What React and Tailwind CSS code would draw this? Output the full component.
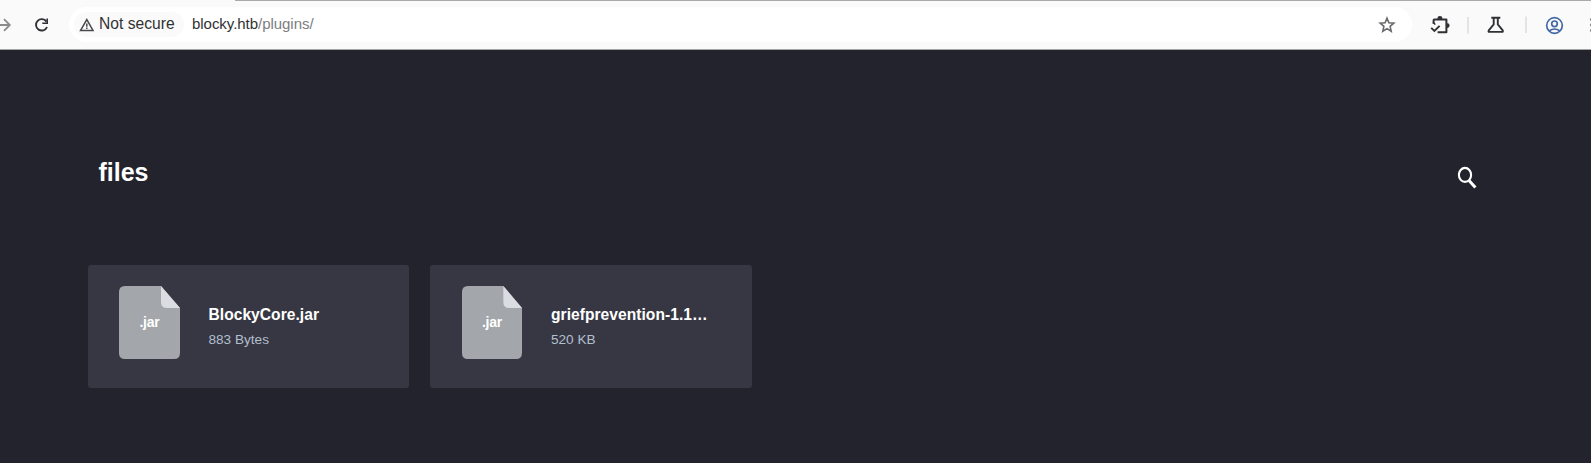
import React from "react";

function ToolbarIcons() {
  return (
    <svg className="h-[49px] w-[179px] shrink-0" viewBox="1412 0 179 49" fill="none">
      <g stroke="#303134" strokeWidth="2">
        <path d="M1433.6 23.4V20.2Q1433.6 19.4 1434.4 19.4H1446.4V32.2H1437.6" strokeLinejoin="round" />
        <path d="M1431.2 27.8L1434.4 31L1439.6 25.8" strokeWidth="1.9" />
      </g>
      <path d="M1437.4 19V18.2A2.5 2.1 0 0 1 1442.4 18.2V19ZM1446.8 23.2H1447.3A2.3 2.4 0 0 1 1447.3 28H1446.8Z" fill="#303134" />
      <path d="M1432.8 22.8Q1434.6 23.2 1435.2 24.6" stroke="#303134" strokeWidth="1.4" />
      <path d="M1468 17V33.5M1526 16.5V33" stroke="#dedfe1" strokeWidth="1.6" />
      <path d="M1491.3 17.8H1500.3M1493.7 18V24.4L1488.8 30.4Q1488 31.9 1489.4 31.9H1502Q1503.3 31.9 1502.7 30.4L1497.8 24.4V18" stroke="#303134" strokeWidth="1.9" strokeLinejoin="round" />
      <g stroke="#4269a5" strokeWidth="1.7">
        <circle cx="1554.5" cy="25.5" r="7.8" />
        <circle cx="1554.5" cy="23.8" r="2.8" />
        <path d="M1549 31Q1554.5 27 1560 31" />
      </g>
      <g fill="#8a8b8d">
        <circle cx="1591.3" cy="19.5" r="1.4" />
        <circle cx="1591.3" cy="25" r="1.4" />
        <circle cx="1591.3" cy="30.5" r="1.4" />
      </g>
    </svg>
  );
}

function BrowserBar() {
  return (
    <header className="flex h-[50px] shrink-0 items-start border-b border-[#a3a3a8] bg-[#fafafa] text-[#303134]">
      <svg className="h-[49px] w-[69px] shrink-0" viewBox="0 0 69 49" fill="none">
        <path d="M0 25H9.4M4 19.2L9.8 25L4 30.8" stroke="#8b8c8e" strokeWidth="1.8" />
        <path d="M46.4 21.6A5.7 5.7 0 1 0 47 27" stroke="#303134" strokeWidth="1.9" />
        <path d="M48 18.5V24H42.3V22.5H46.4V18.5Z" fill="#303134" />
      </svg>
      <div className="mt-[7px] flex h-[35px] w-[1343px] shrink-0 items-center rounded-full bg-white pl-[5px] pr-[16px]">
        <div className="flex h-[25px] w-[110px] items-center rounded-full bg-[#fafafa] pl-[5px]">
          <svg className="h-[16px] w-[16px] shrink-0" viewBox="0 0 16 16" fill="none">
            <path d="M1.6 13.4L7.8 2.6L14 13.4Z" stroke="#48494c" strokeWidth="1.5" />
            <path d="M7.8 6.4V9.8M7.8 10.6V12" stroke="#48494c" strokeWidth="1.5" />
          </svg>
          <span className="-mt-[2px] ml-[4px] whitespace-nowrap text-[15.6px] leading-[20px] tracking-[0.03px]">Not secure</span>
        </div>
        <span className="-mt-[2px] ml-[8px] flex-1 whitespace-nowrap text-[15px] leading-[20px] tracking-[-0.04px]">
          blocky.htb<span className="text-[#7c7d80]">/plugins/</span>
        </span>
        <svg className="h-[18px] w-[18px]" viewBox="0 0 18 18" fill="none">
          <path d="M9 2.2L10.9 6.8L15.8 7.2L12.1 10.4L13.2 15.2L9 12.6L4.8 15.2L5.9 10.4L2.2 7.2L7.1 6.8Z" stroke="#68696c" strokeWidth="1.6" />
        </svg>
      </div>
      <ToolbarIcons />
    </header>
  );
}

function FileCard({ name, size, wide }) {
  return (
    <article
      className={
        "flex h-[123px] items-start rounded-[3px] bg-[#373743] " +
        (wide ? "w-[322px] pl-[32px]" : "w-[321px] pl-[31px]")
      }
    >
      <div className={"mt-[21px] grid h-[73px] shrink-0 " + (wide ? "w-[60px]" : "w-[61px]")}>
        <svg className="col-start-1 row-start-1 h-full w-full" viewBox="0 0 61 73" preserveAspectRatio="none">
          <path d="M6 0H42L61 22V67Q61 73 55 73H6Q0 73 0 67V6Q0 0 6 0Z" fill="#a3a6aa" />
          <path d="M42 0L61 22H48Q42 22 42 16Z" fill="#dadde1" />
        </svg>
        <span className="col-start-1 row-start-1 mt-[26px] text-center text-[14px] font-bold leading-[20px] tracking-[-0.2px] text-white">.jar</span>
      </div>
      <div className={"mt-[40px] " + (wide ? "ml-[29px]" : "ml-[28.5px]")}>
        <h2 className="whitespace-nowrap text-[15.6px] font-bold leading-[20px] tracking-[0.03px] text-white">{name}</h2>
        <p className="mt-[5px] text-[13.6px] leading-[20px] text-[#b2bfcd]">{size}</p>
      </div>
    </article>
  );
}

export default function App() {
  return (
    <div className="flex h-[463px] w-[1591px] flex-col overflow-hidden bg-[#23232e] font-['Liberation_Sans',Arial,sans-serif]">
      <div className="z-10 -mb-px h-px w-[1356px] shrink-0 self-end bg-[#aaaaab]" />
      <BrowserBar />
      <main className="flex flex-1 flex-col pl-[88px]">
        <div className="mt-[106px] flex h-[34px] items-start justify-between pl-[10.5px] pr-[114px]">
          <h1 className="-mt-px text-[25px] font-bold leading-[34px] text-white">files</h1>
          <svg className="mt-[10px] h-[24px] w-[20px]" viewBox="0 0 20 24" fill="none">
            <ellipse cx="8" cy="8.9" rx="6.1" ry="7" stroke="#fff" strokeWidth="2.1" />
            <path d="M12 14.4L18.4 21.4" stroke="#fff" strokeWidth="3" />
          </svg>
        </div>
        <div className="mt-[75px] flex gap-[21px]">
          <FileCard name="BlockyCore.jar" size="883 Bytes" />
          <FileCard name="griefprevention-1.1…" size="520 KB" wide />
        </div>
      </main>
    </div>
  );
}
